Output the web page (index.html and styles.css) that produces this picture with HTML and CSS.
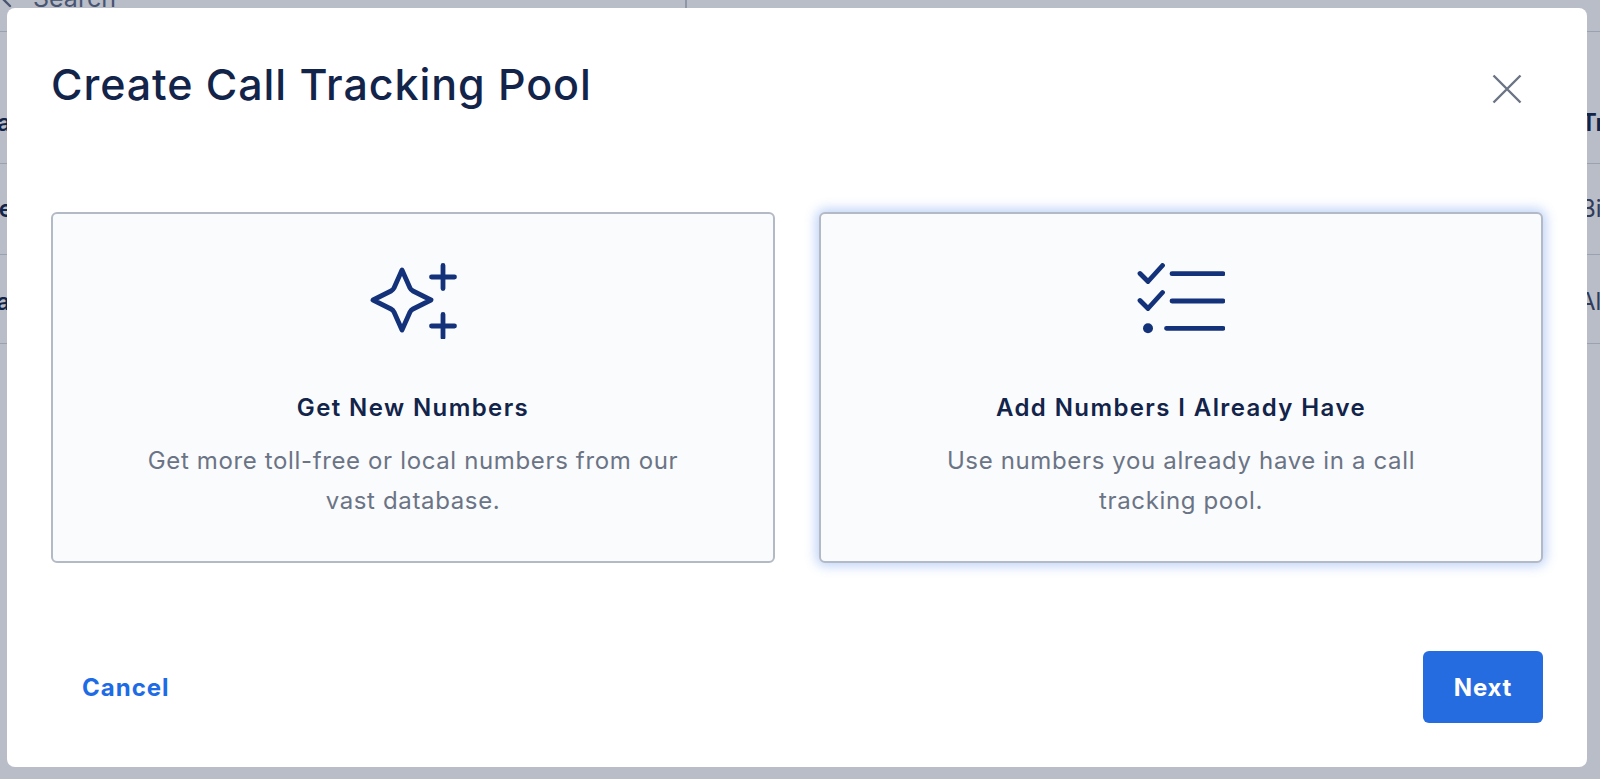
FILE: index.html
```html
<!DOCTYPE html>
<html lang="en">
<head>
<meta charset="utf-8">
<title>Create Call Tracking Pool</title>
<link rel="stylesheet" href="styles.css">
</head>
<body>
<div class="page">
  <div class="search-bar">
    <div class="search-field">
      <svg class="search-icon" width="12" height="8" viewBox="0 0 12 8" fill="none"><path d="M3 -1 10 6" stroke="#5f6b82" stroke-width="2.4" stroke-linecap="round"/></svg>
      <span class="search-text">Search</span>
    </div>
  </div>
  <div class="row row-head"><span class="cell-left cell-name">Name</span><span class="cell-right cell-tr">Tracking</span></div>
  <div class="row row-mid"><span class="cell-left cell-sale">Sale</span><span class="cell-right cell-bi">Bill</span></div>
  <div class="row row-last"><span class="cell-left cell-sales">Sales</span><span class="cell-right cell-al">All</span></div>
</div>

<div class="overlay"></div>

<div class="modal">
  <div class="modal-head">
    <h1 class="modal-title">Create Call Tracking Pool</h1>
    <button class="close" aria-label="Close">
      <svg width="30" height="30" viewBox="0 0 30 30" fill="none"><path d="M1.5 1.500 28.500 28.500M28.500 1.500 1.500 28.500" stroke="#6b7485" stroke-width="2.400"/></svg>
    </button>
  </div>
  <div class="options">
    <div class="option">
      <svg class="option-icon" width="88" height="76" viewBox="0 0 88 76" fill="none" stroke="#13327a" stroke-width="4.800" stroke-linecap="round" stroke-linejoin="round">
        <path d="M33 7 41 25Q42 27 44 28L62 37 44 46Q42 47 41 49L33 67 25 49Q24 47 22 46L4 37 22 28Q24 27 25 25Z"/>
        <path d="M74 2.500V25.500M62.500 14H85.500M74 51.500V74.500M62.500 63H85.500"/>
      </svg>
      <h2 class="option-title">Get New Numbers</h2>
      <p class="option-text">Get more toll-free or local numbers from our<br>vast database.</p>
    </div>
    <div class="option option-selected">
      <svg class="option-icon" width="88" height="76" viewBox="0 0 88 76" fill="none" stroke="#13327a" stroke-width="4.800" stroke-linecap="round" stroke-linejoin="round">
        <path d="M3 10.500 11 18.500 25.500 2.500M3 37.500 11 45.500 25.500 29.500M35 10.700H86M35 38H86M29.500 65.300H86"/>
        <circle cx="11" cy="65.300" r="5" fill="#13327a" stroke="none"/>
      </svg>
      <h2 class="option-title">Add Numbers I Already Have</h2>
      <p class="option-text">Use numbers you already have in a call<br>tracking pool.</p>
    </div>
  </div>
  <div class="modal-foot">
    <button class="btn-cancel">Cancel</button>
    <button class="btn-next">Next</button>
  </div>
</div>
</body>
</html>
```
FILE: styles.css
```css
* { box-sizing: border-box; }
html, body { margin: 0; height: 100%; overflow: hidden; }
body { font-family: Inter, "Liberation Sans", sans-serif; background: #fff; color: #13244a; }

.page { height: 779px; overflow: hidden; }
.search-bar { height: 32px; border-bottom: 1px solid #d5d8e0; }
.search-field { width: 687px; height: 31px; border-right: 2px solid #c5c8d2; display: flex; align-items: flex-start; gap: 21px; }
.search-icon { flex: none; }
.search-text { font-size: 25px; line-height: 24px; margin-top: -14px; color: #5f6b82; }

.row { display: flex; justify-content: space-between; align-items: center; border-bottom: 1px solid #d5d8e0; font-size: 24px; line-height: 34px; white-space: nowrap; color: #3b4660; }
.row-head { height: 132px; padding-top: 50px; font-weight: 600; }
.row-mid { height: 91px; }
.row-last { height: 89px; padding-top: 5px; }
.cell-left { font-weight: 600; color: #13244a; }
.cell-name { margin-left: -21px; }
.cell-sale { margin-left: -37px; }
.cell-sales { margin-left: -19px; }
.cell-right { flex: none; width: 19px; }
.cell-bi { width: 20px; }
.cell-al { width: 21px; }
.row-head .cell-right { color: #13244a; }

.overlay { position: absolute; inset: 0; background: rgba(19, 36, 74, 0.3); }

.modal { position: absolute; left: 7px; top: 8px; width: 1580px; height: 759px; background: #fff; border-radius: 8px; display: flex; flex-direction: column; padding: 0 44px; }
.modal-head { display: flex; justify-content: space-between; align-items: flex-start; height: 204px; }
.modal-title { margin: 52px 0 0; font-size: 43px; line-height: 48px; font-weight: 500; letter-spacing: 0.92px; color: #13244a; }
.close { margin: 66px 21px 0 0; padding: 0; width: 30px; height: 30px; background: none; border: 0; display: block; }
.close svg { display: block; }

.options { display: flex; justify-content: space-between; }
.option { width: 724px; height: 351px; background: #fafbfd; border: 2px solid #b4b9c6; border-radius: 6px; display: flex; flex-direction: column; align-items: center; padding-top: 49px; text-align: center; }
.option-selected { box-shadow: 0 0 12px 3px rgba(36, 107, 227, 0.3); }
.option-icon { display: block; flex: none; }
.option-title { margin: 53px 0 0; font-size: 24px; line-height: 32px; font-weight: 600; letter-spacing: 1.4px; color: #13244a; }
.option-text { margin: 17px 0 0; font-size: 24px; line-height: 40px; font-weight: 400; letter-spacing: 0.64px; color: #6b7485; }

.modal-foot { display: flex; justify-content: space-between; align-items: center; margin-top: 88px; }
.btn-cancel { border: 0; background: none; padding: 2px 31px 0; font: 700 24px/32px Inter, "Liberation Sans", sans-serif; letter-spacing: 1px; color: #1e6be6; }
.btn-next { width: 120px; height: 72px; border: 0; border-radius: 6px; padding: 2px 0 0; background: #266ce1; color: #fff; font: 700 24px/32px Inter, "Liberation Sans", sans-serif; letter-spacing: 0.8px; }
```
